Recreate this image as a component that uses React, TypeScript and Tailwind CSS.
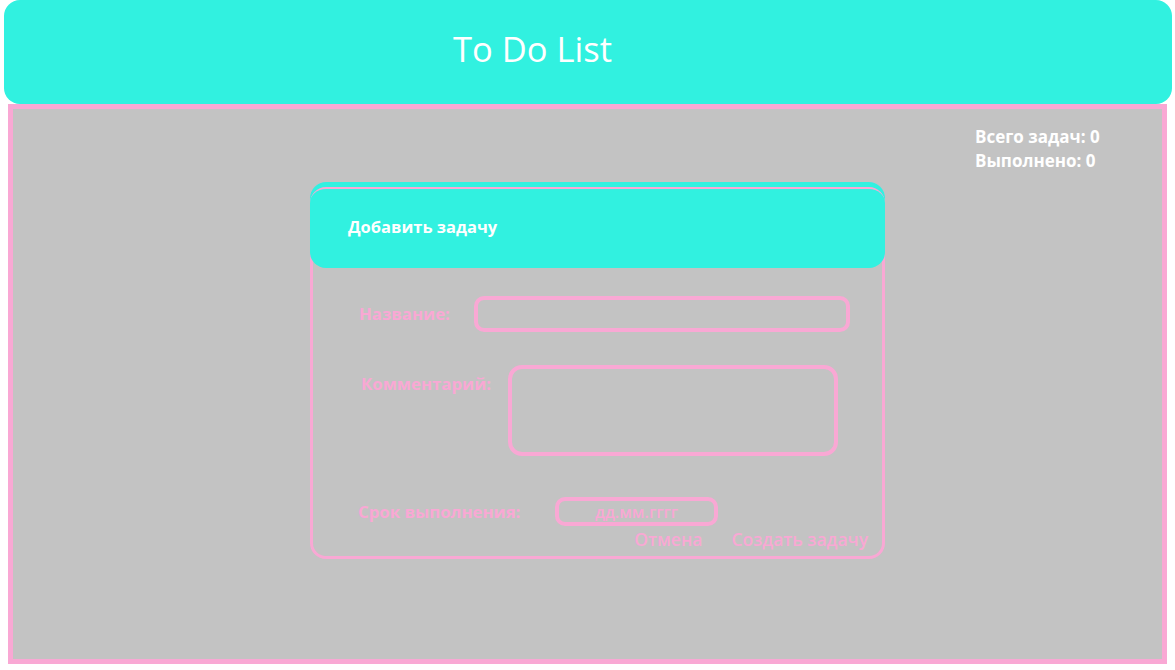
import { useState } from "react";

const font = { fontFamily: '"Open Sans", "Liberation Sans", sans-serif' };

function Stats({ total, done }: { total: number; done: number }) {
  return (
    <div className="flex justify-end pt-[16px]">
      <div className="w-[187px] text-[17px] leading-[24px] font-bold text-white">
        <div>Всего задач: {total}</div>
        <div>Выполнено: {done}</div>
      </div>
    </div>
  );
}

function AddTaskCard() {
  const [title, setTitle] = useState("");
  const [comment, setComment] = useState("");
  const [date, setDate] = useState("");

  return (
    <div className="ml-[297px] mt-[9px] flex h-[377px] w-[575px] flex-col rounded-2xl border-[3px] border-[#f9a8d4]">
      <div className="-mx-[3px] -mt-[3px] h-[86px] rounded-2xl bg-[#31f1e0] pt-[5px]">
        <div className="flex h-full items-center rounded-t-2xl border-t-2 border-[#f9a8d4] pb-[2px] pl-[38px] text-[16.5px] font-bold text-white">
          Добавить задачу
        </div>
      </div>

      <div className="flex flex-1 flex-col pl-[46px] pt-[28px] text-[16.8px] font-bold text-[#f9a8d4]">
        <div className="flex items-center">
          <label className="w-[115px]">Название:</label>
          <input
            value={title}
            onChange={(e) => setTitle(e.target.value)}
            className="h-[36px] w-[376px] rounded-[10px] border-4 border-[#f9a8d4] bg-transparent px-2 outline-none"
          />
        </div>

        <div className="mt-[33px] flex items-start">
          <label className="ml-[2px] w-[147px] pt-[6px]">Комментарий:</label>
          <textarea
            value={comment}
            onChange={(e) => setComment(e.target.value)}
            className="h-[91px] w-[330px] resize-none rounded-[14px] border-4 border-[#f9a8d4] bg-transparent px-2 outline-none"
          />
        </div>

        <div className="mt-[41px] flex items-center">
          <label className="-ml-[1px] w-[197px]">Срок выполнения:</label>
          <input
            value={date}
            onChange={(e) => setDate(e.target.value)}
            placeholder="дд.мм.гггг"
            className="h-[29px] w-[163px] rounded-[10px] border-4 border-[#f9a8d4] bg-transparent text-center text-[16px] font-semibold outline-none placeholder:text-[#f9a8d4]"
          />
        </div>

        <div className="mt-[2px] flex justify-end gap-[29px] pr-[14px] text-[17.5px] font-semibold leading-[22px]">
          <button type="button">Отмена</button>
          <button type="button">Создать задачу</button>
        </div>
      </div>
    </div>
  );
}

export default function App() {
  return (
    <div className="h-[670px] w-[1175px] bg-white" style={font}>
      <header className="ml-[4px] mr-[3px] flex h-[104px] items-center rounded-2xl bg-[#31f1e0] pb-[6px] pl-[449px] text-[34.5px] text-white">
        To Do List
      </header>
      <main className="ml-[8px] h-[560px] w-[1159px] border-[5px] border-[#f9a8d4] bg-[#c3c3c3]">
        <Stats total={0} done={0} />
        <AddTaskCard />
      </main>
    </div>
  );
}
